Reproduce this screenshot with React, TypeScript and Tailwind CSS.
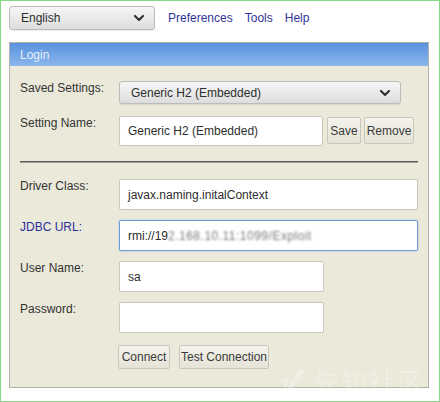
import React from "react";

const Chevron = () => (
  <svg width="12" height="8" viewBox="0 0 12 8">
    <path d="M2 2 L6 6 L10 2" fill="none" stroke="#333" strokeWidth="2.2" strokeLinecap="round" strokeLinejoin="round" />
  </svg>
);

const Label = ({ children, blue }: { children: React.ReactNode; blue?: boolean }) => (
  <div className={`w-[99px] shrink-0 leading-[14px] ${blue ? "text-[#2f2f9e]" : "text-[#333]"}`}>{children}</div>
);

const Btn = ({ children, w }: { children: React.ReactNode; w: string }) => (
  <div
    className={`${w} flex items-center justify-center rounded-[2px] border border-[#c9c7bb] bg-gradient-to-b from-[#f4f3ec] to-[#e5e3d7] text-[#3a3a3a]`}
  >
    {children}
  </div>
);

export default function App() {
  return (
    <div className="relative w-[440px] h-[402px] bg-white border border-[#86d886] text-[12px] text-[#333] font-['Liberation_Sans',Arial,sans-serif] leading-[14px] overflow-hidden">
      {/* top bar */}
      <div className="flex items-center pl-[8px] pt-[5px]">
        <div className="flex items-center justify-between w-[146px] h-[24px] pl-[11px] pr-[9px] rounded-[3px] border border-[#bcbcbc] bg-gradient-to-b from-[#f6f6f6] to-[#dddddd] shadow-[0_1px_1px_rgba(0,0,0,0.08)] text-[#2e2e2e]">
          <span>English</span>
          <Chevron />
        </div>
        <div className="flex items-center gap-[12px] ml-[13px] text-[#33339a]">
          <span>Preferences</span>
          <span>Tools</span>
          <span>Help</span>
        </div>
      </div>

      {/* login panel */}
      <div className="ml-[8px] mt-[12px] w-[420px] h-[346px] border border-[#b2b1a5] bg-[#ebe9da]">
        <div className="h-[23px] flex items-center pl-[10px] bg-gradient-to-b from-[#5892de] to-[#8cb6ec] text-[#e6effb]">
          Login
        </div>
        <div className="pl-[10px] pt-[15px]">
          {/* saved settings */}
          <div className="flex items-start">
            <Label>Saved Settings:</Label>
            <div className="flex items-center justify-between w-[282px] h-[23px] pl-[11px] pr-[9px] rounded-[3px] border border-[#bcbcbc] bg-gradient-to-b from-[#f6f6f6] to-[#dddddd] shadow-[0_1px_1px_rgba(0,0,0,0.08)] text-[#2e2e2e]">
              <span>Generic H2 (Embedded)</span>
              <Chevron />
            </div>
          </div>

          {/* setting name */}
          <div className="flex items-start mt-[12px]">
            <Label>Setting Name:</Label>
            <div className="w-[204px] h-[30px] flex items-center pl-[8px] rounded-[2px] border border-[#cac8bc] bg-white text-[#2e2e2e]">
              Generic H2 (Embedded)
            </div>
            <div className="ml-[4px] mt-[1px]">
              <Btn w="w-[34px] h-[27px]">Save</Btn>
            </div>
            <div className="ml-[3px] mt-[1px]">
              <Btn w="w-[50px] h-[27px]">Remove</Btn>
            </div>
          </div>

          {/* separator */}
          <div className="mt-[15px] w-[398px] border-t border-b border-t-[#5a5a56] border-b-[#a3a298]" />

          <div className="flex flex-col gap-[10px] mt-[16px]">
            <div className="flex items-start">
              <Label>Driver Class:</Label>
              <div className="w-[299px] h-[31px] flex items-center pl-[8px] rounded-[2px] border border-[#cac8bc] bg-white text-[#2e2e2e]">
                javax.naming.initalContext
              </div>
            </div>
            <div className="flex items-start">
              <Label blue>JDBC URL:</Label>
              <div className="w-[299px] h-[31px] flex items-center pl-[8px] rounded-[2px] border border-[#6f9bd6] shadow-[0_0_2px_#90b4e8] bg-white text-[#2e2e2e]">
                <span>rmi://19</span>
                <span className="blur-[1.3px] text-[#7a7a7a] tracking-[0.5px]">2.168.10.11:1099/Exploit</span>
              </div>
            </div>
            <div className="flex items-start">
              <Label>User Name:</Label>
              <div className="w-[205px] h-[31px] flex items-center pl-[8px] rounded-[2px] border border-[#cac8bc] bg-white text-[#2e2e2e]">
                sa
              </div>
            </div>
            <div className="flex items-start">
              <Label>Password:</Label>
              <div className="w-[205px] h-[31px] rounded-[2px] border border-[#cac8bc] bg-white" />
            </div>
          </div>

          <div className="flex items-start mt-[12px] ml-[98px] gap-[9px]">
            <Btn w="w-[52px] h-[24px]">Connect</Btn>
            <Btn w="w-[90px] h-[24px]">Test Connection</Btn>
          </div>
        </div>
      </div>

      {/* watermark */}
      <div className="absolute left-[280px] top-[366px] flex items-center gap-[6px] text-white/25 pointer-events-none">
        <svg width="26" height="26" viewBox="0 0 26 26">
          <polygon points="4,24 18,2 24,2 10,24" fill="rgba(255,255,255,0.3)" />
          <polygon points="2,10 8,10 4,24" fill="rgba(255,255,255,0.3)" />
        </svg>
        <span className="text-[26px] leading-[28px] font-['Noto_Sans_CJK_SC',sans-serif] tracking-[2px]">先知社区</span>
      </div>
    </div>
  );
}
